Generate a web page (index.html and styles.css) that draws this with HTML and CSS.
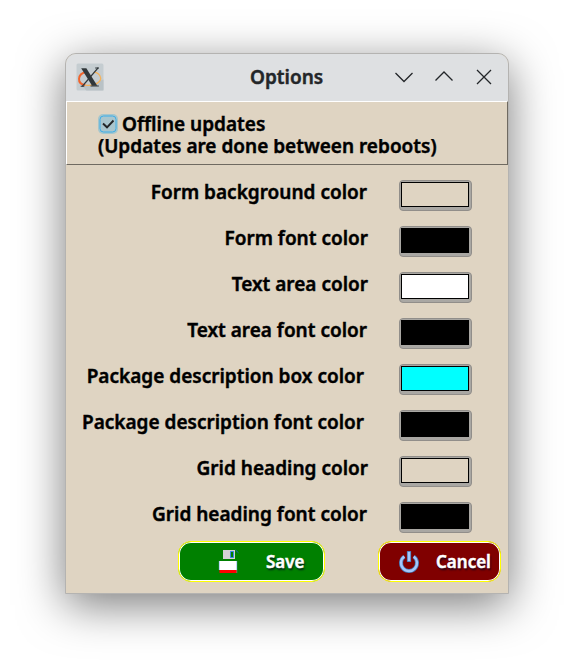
FILE: index.html
```html
<!DOCTYPE html>
<html lang="en">
<head>
<meta charset="utf-8">
<title>Options</title>
<link rel="stylesheet" href="styles.css">
</head>
<body>
<main class="window">
  <header class="titlebar">
    <svg class="app-icon" viewBox="0 0 27 27">
      <rect x="0.5" y="0.5" width="26" height="26" rx="1.5" fill="#c5cdd1"/>
      <path d="M7 23L26.500 16V26.500H10z" fill="#b9c2c6"/>
      <path d="M10 8.500C1 10.500 0.500 20 9 21.300" fill="none" stroke="#f0642d" stroke-width="1.900"/>
      <path d="M9 21.300C17 22.500 24 19 23.800 14.500C23.500 11 20 9 17.500 8.800" fill="none" stroke="#f6b35b" stroke-width="1.300"/>
      <path d="M5 5H10L20.500 22H15.500z" fill="#30373a"/>
      <path d="M21.500 4.500L6 22.500" stroke="#30373a" stroke-width="1.300"/>
      <path d="M4.500 22.500H8M18.500 4.800H22M14 22.200H22" stroke="#30373a"/>
    </svg>
    <h1 class="title">Options</h1>
    <div class="controls">
      <svg viewBox="0 0 20 20"><path d="M1.500 6L10 14.500L18.500 6"/></svg>
      <svg viewBox="0 0 20 20"><path d="M1.500 13.500L10 5L18.500 13.500"/></svg>
      <svg viewBox="0 0 20 20"><path d="M3 3L17 17M17 3L3 17"/></svg>
    </div>
  </header>
  <section class="updates">
    <label class="check-line">
      <svg class="checkbox" viewBox="0 0 20 20">
        <rect width="20" height="20" rx="5" fill="#a5c6cd"/>
        <rect x="2" y="2" width="16" height="16" rx="3.500" fill="#a9c6ce" stroke="#3daee9"/>
        <path d="M5 9.500L9 13.300L15.500 6.500" fill="none" stroke="#232629" stroke-width="1.900"/>
      </svg>
      <span>Offline updates</span>
    </label>
    <p class="note">(Updates are done between reboots)</p>
  </section>
  <section class="colors">
    <div class="row"><span class="name">Form background color</span><button class="swatch beige"></button></div>
    <div class="row"><span class="name right">Form font color</span><button class="swatch black"></button></div>
    <div class="row"><span class="name right">Text area color</span><button class="swatch white"></button></div>
    <div class="row"><span class="name">Text area font color</span><button class="swatch black"></button></div>
    <div class="row"><span class="name package">Package description box color</span><button class="swatch cyan"></button></div>
    <div class="row"><span class="name package">Package description font color</span><button class="swatch black"></button></div>
    <div class="row"><span class="name right">Grid heading color</span><button class="swatch beige"></button></div>
    <div class="row"><span class="name">Grid heading font color</span><button class="swatch black"></button></div>
  </section>
  <footer class="actions">
    <button class="action save">
      <svg viewBox="0 0 22 26">
        <rect x="5" y="1" width="12" height="9" fill="#d3d3d3"/>
        <path d="M12.500 2.500H15.500V8.500H12.500z" fill="#008000" stroke="#3584e4"/>
        <path d="M17.500 1L20.500 3.800" stroke="#1a5fb4"/>
        <rect x="1" y="12" width="18" height="9" fill="#fff"/>
        <path d="M1.300 12V21M18.700 12V24" stroke="#91b9ef" stroke-width="0.700"/>
        <rect x="1.500" y="21" width="17" height="3" fill="#f00"/>
      </svg>
      <span>Save</span>
    </button>
    <button class="action cancel">
      <svg viewBox="0 0 22 26">
        <path d="M6.300 7.500A8 8 0 1 0 15.700 7.500" fill="none" stroke="#4678b5" stroke-width="4"/>
        <path d="M11 2V13" stroke="#4678b5" stroke-width="4.200"/>
        <path d="M6.300 7.500A8 8 0 1 0 15.700 7.500" fill="none" stroke="#a5c8fa" stroke-width="2.500"/>
        <path d="M11 2.800V12.200" stroke="#a5c8fa" stroke-width="2.600"/>
      </svg>
      <span>Cancel</span>
    </button>
  </footer>
</main>
</body>
</html>
```
FILE: styles.css
```css
* { box-sizing: border-box; }

body {
  margin: 0;
  min-height: 671px;
  padding: 53px 65px;
  background: #fff;
  color: #000;
  font: 600 19px/22px "Noto Sans", sans-serif;
  -webkit-text-stroke: 0.45px currentColor;
}

.window {
  width: 444px;
  height: 541px;
  border: 1px solid #b4b3b1;
  border-radius: 11px 11px 0 0;
  background: #dfd4c2;
  box-shadow: 0 11px 46px rgba(0, 0, 0, 0.52);
  overflow: hidden;
}

.titlebar {
  display: grid;
  grid-template-columns: 160px 122px 1fr;
  align-items: center;
  height: 47px;
  padding: 0 14px 2px 10px;
  background: #dee0e2;
}

.app-icon { width: 28px; height: 28px; }

.title {
  margin: 0;
  padding-left: 14px;
  color: #232629;
  font-size: 19px;
  font-weight: 600;
  white-space: nowrap;
}

.controls { display: flex; justify-content: flex-end; gap: 20px; }

.controls svg {
  width: 20px;
  height: 20px;
  fill: none;
  stroke: #232629;
  stroke-width: 1.3;
}

.updates {
  height: 64px;
  padding: 11px 0 0 31px;
  border: 1px solid;
  border-color: #fff #6f6a61 #6f6a61 #fff;
}

.check-line { display: flex; align-items: center; height: 22px; gap: 4px; }
.checkbox { width: 20px; height: 20px; }
.note { margin: 0; white-space: nowrap; clip-path: inset(4px 0 -6px 0); }

.colors { padding-top: 15px; }

.row {
  display: grid;
  grid-template-columns: 301px 73px;
  column-gap: 32px;
  height: 46px;
}

.name { padding-top: 1px; text-align: right; white-space: nowrap; }
.name.right { margin-right: -1px; }
.name.package { padding-right: 3px; }

.swatch {
  height: 31px;
  padding: 0;
  border: 1px solid #918e8a;
  border-radius: 4px;
  background: #a9a7a3;
  display: grid;
}

.swatch::before {
  content: "";
  margin: 1px 2px 3px 1px;
  border: 1px solid #000;
  background: var(--fill);
}

.beige { --fill: #dfd4c2; }
.black { --fill: #000; }
.white { --fill: #fff; }
.cyan { --fill: #0ff; }

.actions {
  display: flex;
  justify-content: space-between;
  margin-top: -7px;
  padding: 0 7px 0 112px;
}

.action {
  display: flex;
  align-items: center;
  height: 41px;
  padding: 0;
  border: 1px solid #ff0;
  border-radius: 13px;
  box-shadow: inset 0 0 0 1px #fff;
  color: #fff;
  font: 600 17px/22px "Noto Sans", sans-serif;
  -webkit-text-stroke: 0.45px currentColor;
  text-shadow: 1px 2px 2px rgba(0, 0, 30, 0.8);
}

.action svg { width: 22px; height: 26px; }
.save { width: 147px; padding-left: 39px; gap: 26px; background: #008000; }
.cancel { width: 123px; padding-left: 19px; gap: 16px; background: #800000; }
```
